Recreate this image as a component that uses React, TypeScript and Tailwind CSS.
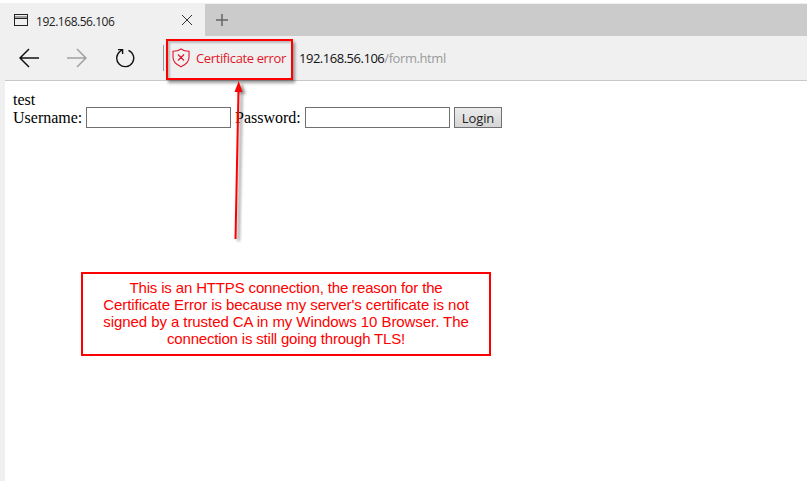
import React from "react";

function TabStrip() {
  return (
    <div className="flex h-8 bg-[#cbcbcb]">
      <div className="flex w-[200px] items-center bg-[#f0f0f0] pl-[9px]">
        <svg width="14" height="12" viewBox="0 0 14 12" fill="none" className="-mt-px shrink-0" shapeRendering="crispEdges">
          <rect x="1" y="2" width="12" height="2" fill="#a0a0a0" />
          <path d="M0 .5h14M0 11.5h14M.5 0v12M13.5 0v12M0 4.5h14" stroke="#222" />
        </svg>
        <span className="ml-[8px] mt-[3px] w-[145px] whitespace-nowrap text-[12px] leading-4 tracking-[-0.47px] text-[#222]">
          192.168.56.106
        </span>
        <svg width="12" height="12" viewBox="0 0 12 12" className="shrink-0" fill="none" stroke="#333">
          <path d="M1 1l10 10M11 1L1 11" />
        </svg>
      </div>
      <svg width="12" height="12" viewBox="0 0 12 12" className="ml-[11px] mt-[10px]" fill="none" stroke="#666" strokeWidth="1.5">
        <path d="M6 0v12M0 6h12" />
      </svg>
    </div>
  );
}

function Toolbar() {
  return (
    <div className="flex h-[45px] items-center border-b border-[#c8c8c8] bg-[#f0f0f0] pl-[14px]">
      <svg width="20" height="20" viewBox="0 0 20 20" fill="none" stroke="#111" strokeWidth="1.5" className="shrink-0">
        <path d="M20 10H1M10 1L1 10l9 9" />
      </svg>
      <svg width="20" height="20" viewBox="0 0 20 20" fill="none" stroke="#a0a0a0" strokeWidth="1.5" className="ml-7 shrink-0">
        <path d="M0 10h19M10 1l9 9-9 9" />
      </svg>
      <svg width="20" height="20" viewBox="0 0 20 20" fill="none" stroke="#111" strokeWidth="1.4" className="ml-7 shrink-0">
        <path d="M13.500 2.300A8.500 8.500 0 1 1 5.300 3.200L7.400 1.600M3 1.600H7.600V6" />
      </svg>
      <div className="ml-[28px] h-[26px] w-px shrink-0 bg-[#999]" />
      <svg width="18" height="20" viewBox="0 0 18 20" fill="none" stroke="#e0162b" strokeWidth="1.100" className="ml-2 shrink-0">
        <path d="M9 1C6.800 2.700 4 3.300 1 3.300v6.200c0 4.600 3.400 7.200 8 9.300 4.600-2.100 8-4.700 8-9.300V3.300C14 3.300 11.200 2.700 9 1zM6 6.500l6 6M12 6.500l-6 6" />
      </svg>
      <span className="ml-[6px] w-[103px] whitespace-nowrap text-[13px] leading-5 tracking-[-0.37px] text-[#e0162b]">
        Certificate error
      </span>
      <span className="whitespace-nowrap text-[13px] leading-5 tracking-[-0.48px] text-[#111]">192.168.56.106</span>
      <span className="whitespace-nowrap text-[13px] leading-5 tracking-[-0.42px] text-[#9b9b9b]">/form.html</span>
    </div>
  );
}

function LoginPage() {
  return (
    <div className="pl-2 pt-[9px] font-['Liberation_Serif',serif] text-[16px] text-black">
      <div className="h-[17px] leading-[20px]">test</div>
      <form className="flex h-[21px] items-center" onSubmit={(e) => e.preventDefault()}>
        <label htmlFor="user" className="w-[73px] whitespace-nowrap leading-[21px]">Username:</label>
        <input id="user" className="h-[21px] w-[145px] border border-[#707070] bg-white outline-none" />
        <label htmlFor="pass" className="ml-1 w-[70px] whitespace-nowrap leading-[21px]">Password:</label>
        <input id="pass" type="password" className="h-[21px] w-[145px] border border-[#707070] bg-white outline-none" />
        <button className="ml-1 h-[21px] w-12 border border-[#707070] bg-linear-to-b from-[#ececec] to-[#d5d5d5] font-['Open_Sans',sans-serif] text-[13px] leading-[20px] tracking-[-0.1px] text-[#222]">
          Login
        </button>
      </form>
    </div>
  );
}

function Annotations() {
  return (
    <div className="pointer-events-none">
      <div className="absolute left-[166px] top-[39px] h-[41px] w-[127px] border-2 border-[#fe0000] shadow-[2px_3px_3px_rgba(0,0,0,0.4)]" />
      <div className="absolute left-[168px] top-[41px] h-[37px] w-[123px] shadow-[inset_2px_2px_2px_rgba(0,0,0,0.22)]" />
      <svg className="absolute left-[225px] top-[78px] drop-shadow-[3px_2px_1.5px_rgba(0,0,0,0.45)]" width="30" height="170" viewBox="0 0 30 170">
        <path d="M13.500 12L10.500 161" stroke="#fe0000" strokeWidth="2" />
        <path d="M13.700 3L17.500 14H9.500z" fill="#fe0000" />
      </svg>
      <div className="absolute left-[81px] top-[272px] h-[84px] w-[410px] border-2 border-[#fe0000] bg-white pt-[5px] text-center font-['Liberation_Sans',sans-serif] text-[15px] leading-[17px] text-[#fe0000]">
        <div className="tracking-[-0.15px]">This is an HTTPS connection, the reason for the</div>
        <div className="tracking-[-0.07px]">Certificate Error is because my server's certificate is not</div>
        <div className="tracking-[-0.07px]">signed by a trusted CA in my Windows 10 Browser. The</div>
        <div className="tracking-[-0.18px]">connection is still going through TLS!</div>
      </div>
    </div>
  );
}

export default function App() {
  return (
    <div className="relative h-[481px] w-[807px] overflow-hidden bg-white pt-[3px] font-['Open_Sans',sans-serif]">
      <div className="h-full border-l-[5px] border-t border-[#f0f0f0] bg-white">
        <TabStrip />
        <Toolbar />
        <LoginPage />
      </div>
      <Annotations />
    </div>
  );
}
